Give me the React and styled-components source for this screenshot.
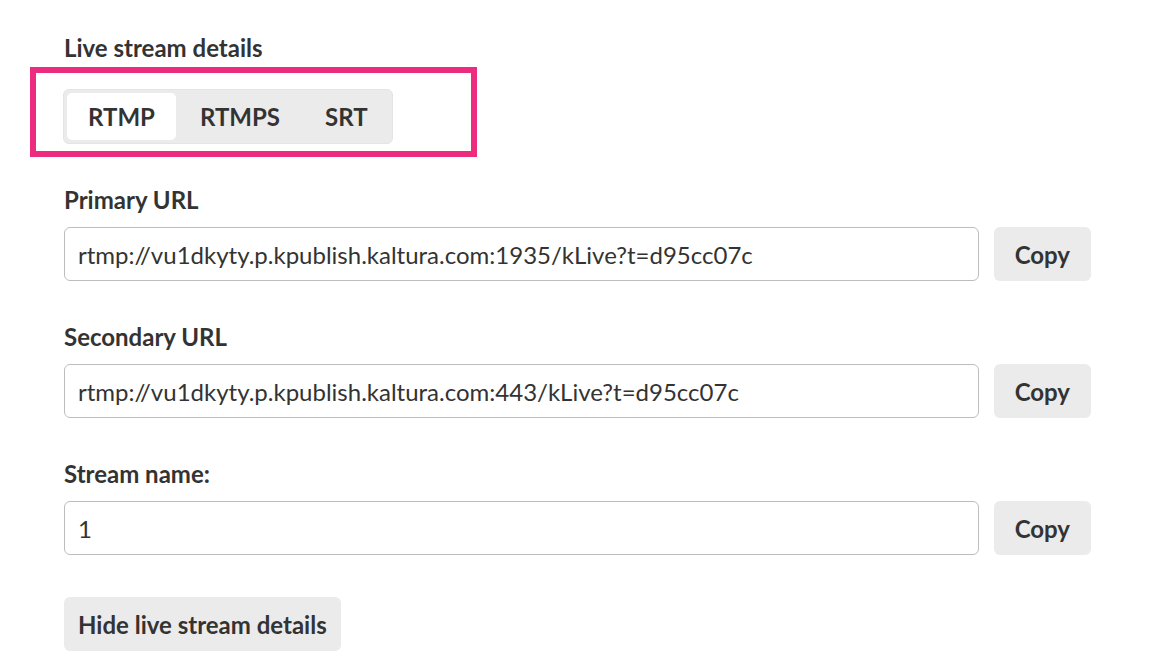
import React, { useState } from "react";
import styled, { createGlobalStyle } from "styled-components";

const GlobalStyle = createGlobalStyle`
  body {
    margin: 0;
    background: #ffffff;
    font-family: "Lato", "Noto Sans", sans-serif;
    color: #333333;
  }
`;

const Page = styled.div`
  padding: 33px 0 0 64px;
  width: 1027px;
`;

const Title = styled.h2`
  margin: 0;
  font-size: 24px;
  line-height: 30px;
  font-weight: 700;
  color: #333333;
`;

const Highlight = styled.div`
  margin: 4px 0 0 -34px;
  width: 447px;
  height: 90px;
  box-sizing: border-box;
  border: 6px solid #ec2d7f;
  padding: 16px 0 0 27px;
`;

const Segmented = styled.div`
  display: inline-flex;
  gap: 3px;
  padding: 3px;
  background: #ebebeb;
  border-radius: 6px;
  border: 1px solid #e4e4e4;
  box-sizing: border-box;
  height: 55px;
`;

const Tab = styled.button`
  border: none;
  height: 47px;
  padding: 0 21px;
  border-radius: 5px;
  background: ${(p) => (p.$active ? "#ffffff" : "transparent")};
  font-family: "Lato", "Noto Sans", sans-serif;
  font-weight: 700;
  font-size: 24px;
  color: #333333;
  cursor: pointer;
`;

const Field = styled.div`
  margin-top: ${(p) => p.$top}px;
`;

const Label = styled.div`
  font-size: 24px;
  line-height: 26px;
  font-weight: 700;
  color: #333333;
  margin-bottom: 14px;
`;

const Row = styled.div`
  display: flex;
  gap: 15px;
  align-items: center;
`;

const Input = styled.input`
  width: 915px;
  height: 54px;
  box-sizing: border-box;
  border: 1.5px solid #bdbdbd;
  border-radius: 6px;
  padding: 0 13px;
  font-family: "Lato", "Noto Sans", sans-serif;
  font-size: 24px;
  color: #333333;
  outline: none;
`;

const GreyButton = styled.button`
  height: 54px;
  padding: 0 ${(p) => p.$pad || 21}px;
  border: none;
  border-radius: 6px;
  background: #ebebeb;
  font-family: "Lato", "Noto Sans", sans-serif;
  font-weight: 700;
  font-size: 24px;
  color: #333333;
  cursor: pointer;
`;

const HideWrap = styled.div`
  margin-top: 42px;
`;

const fields = [
  { label: "Primary URL", value: "rtmp://vu1dkyty.p.kpublish.kaltura.com:1935/kLive?t=d95cc07c", top: 30 },
  { label: "Secondary URL", value: "rtmp://vu1dkyty.p.kpublish.kaltura.com:443/kLive?t=d95cc07c", top: 43 },
  { label: "Stream name:", value: "1", top: 43 },
];

export default function App() {
  const [tab, setTab] = useState("RTMP");
  return (
    <>
      <GlobalStyle />
      <Page>
        <Title>Live stream details</Title>
        <Highlight>
          <Segmented>
            {["RTMP", "RTMPS", "SRT"].map((t) => (
              <Tab key={t} $active={tab === t} onClick={() => setTab(t)}>
                {t}
              </Tab>
            ))}
          </Segmented>
        </Highlight>
        {fields.map((f) => (
          <Field key={f.label} $top={f.top}>
            <Label>{f.label}</Label>
            <Row>
              <Input readOnly value={f.value} />
              <GreyButton>Copy</GreyButton>
            </Row>
          </Field>
        ))}
        <HideWrap>
          <GreyButton $pad={14}>Hide live stream details</GreyButton>
        </HideWrap>
      </Page>
    </>
  );
}
